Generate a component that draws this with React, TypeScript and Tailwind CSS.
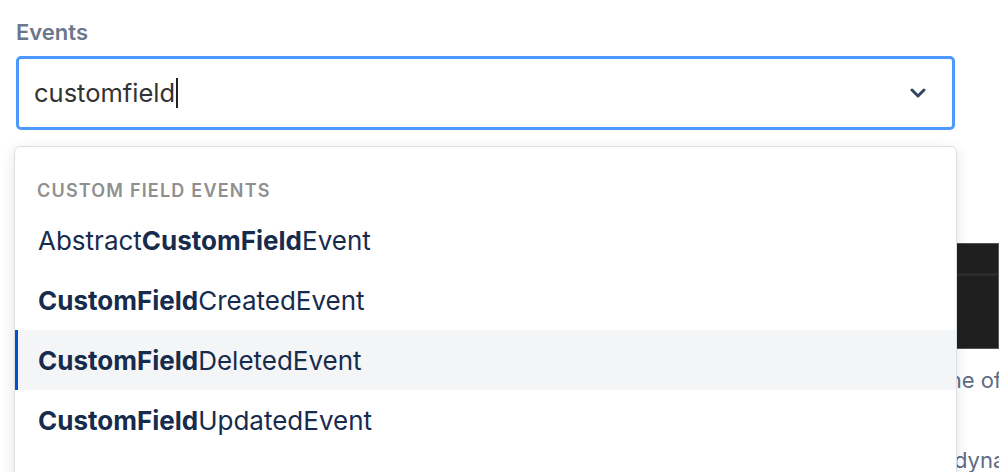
import React from "react";

const items = [
  { pre: "Abstract", bold: "CustomField", post: "Event" },
  { pre: "", bold: "CustomField", post: "CreatedEvent" },
  { pre: "", bold: "CustomField", post: "DeletedEvent", active: true },
  { pre: "", bold: "CustomField", post: "UpdatedEvent" },
];

export default function App() {
  return (
    <div className="relative h-[472px] w-[999px] overflow-hidden bg-white [font-family:Inter,'Noto_Sans',sans-serif]">
      <div className="w-[955px] pl-4 pt-[18px]">
        <p className="text-[22px] font-semibold leading-[28px] text-[#6b778c]">Events</p>

        <div className="relative mt-[10px]">
          {/* input */}
          <div className="flex h-[74px] items-center rounded-[5px] border-[3px] border-[#4c9aff] bg-white pl-[15px] pr-[26px]">
            <span className="text-[25.5px] text-[#333333]">customfield</span>
            <span className="ml-[1px] inline-block h-[30px] w-[2px] bg-[#222]" />
            <svg className="ml-auto" width="16" height="10" viewBox="0 0 16 10" fill="none">
              <path d="M2 2l6 6 6-6" stroke="#344563" strokeWidth="3" strokeLinecap="round" strokeLinejoin="round" />
            </svg>
          </div>

          {/* menu */}
          <div className="absolute left-[-2px] right-[-2px] top-full z-10 mt-[16px] h-[400px] rounded-[6px] border border-[#dcdfe4] bg-white pt-[32px] shadow-[0_4px_14px_rgba(9,30,66,0.12)]">
            <p className="px-[22px] text-[18px] font-semibold leading-[24px] tracking-[1.2px] text-[#8f8f8f]">
              CUSTOM FIELD EVENTS
            </p>
            <div className="mt-[7px]">
              {items.map((it) => (
                <div
                  key={it.post}
                  className={`flex h-[60px] items-center border-l-[3px] pl-[20px] text-[26px] text-[#172b4d] ${
                    it.active ? "border-[#0052cc] bg-[#f4f5f7]" : "border-transparent"
                  }`}
                >
                  <span>{it.pre}</span>
                  <span className="font-bold">{it.bold}</span>
                  <span>{it.post}</span>
                </div>
              ))}
            </div>
          </div>
        </div>
      </div>

      {/* content behind the menu */}
      <div className="pl-4">
        <div className="mt-[113px] h-[106px] border border-[#555] bg-[#1f1f1f]">
          <div className="mt-[29px] h-[3px] bg-[#2b2b2b]" />
        </div>
        <p className="mr-[-3px] mt-[16px] whitespace-nowrap text-right text-[22px] leading-[30px] text-[#5e6c84]">
          Pick one of
        </p>
        <p className="mt-[50px] whitespace-nowrap pl-[938px] text-[22px] leading-[30px] text-[#5e6c84]">
          dynamically
        </p>
      </div>
    </div>
  );
}
